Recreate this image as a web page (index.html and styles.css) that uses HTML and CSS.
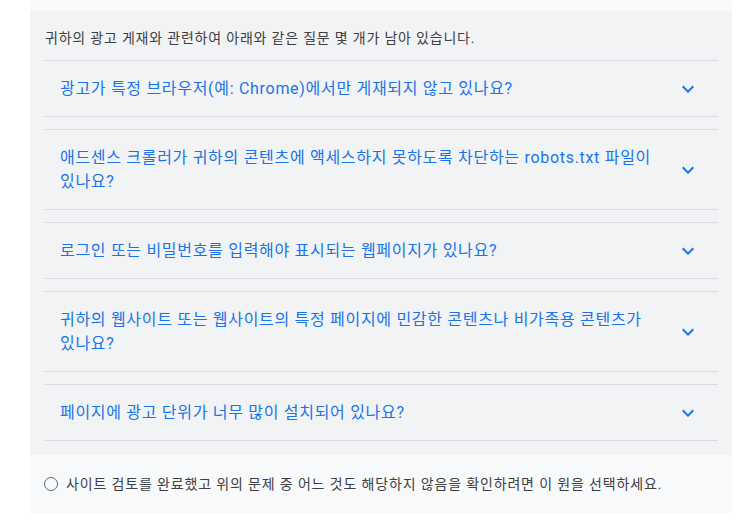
FILE: index.html
```html
<!DOCTYPE html>
<html lang="ko">
<head>
<meta charset="utf-8">
<link rel="stylesheet" href="styles.css">
</head>
<body>
<div class="panel">
  <div class="top-strip"></div>
  <div class="questions">
    <p class="intro">귀하의 광고 게재와 관련하여 아래와 같은 질문 몇 개가 남아 있습니다.</p>
    <div class="list">
      <div class="item">
        <span class="q">광고가 특정 브라우저(예: Chrome)에서만 게재되지 않고 있나요?</span>
        <svg class="chev" viewBox="0 0 24 24" width="24" height="24"><path d="M16.59 8.59L12 13.17 7.41 8.59 6 10l6 6 6-6z"/></svg>
      </div>
      <div class="item">
        <span class="q">애드센스 크롤러가 귀하의 콘텐츠에 액세스하지 못하도록 차단하는 robots.txt 파일이 있나요?</span>
        <svg class="chev" viewBox="0 0 24 24" width="24" height="24"><path d="M16.59 8.59L12 13.17 7.41 8.59 6 10l6 6 6-6z"/></svg>
      </div>
      <div class="item">
        <span class="q">로그인 또는 비밀번호를 입력해야 표시되는 웹페이지가 있나요?</span>
        <svg class="chev" viewBox="0 0 24 24" width="24" height="24"><path d="M16.59 8.59L12 13.17 7.41 8.59 6 10l6 6 6-6z"/></svg>
      </div>
      <div class="item">
        <span class="q">귀하의 웹사이트 또는 웹사이트의 특정 페이지에 민감한 콘텐츠나 비가족용 콘텐츠가 있나요?</span>
        <svg class="chev" viewBox="0 0 24 24" width="24" height="24"><path d="M16.59 8.59L12 13.17 7.41 8.59 6 10l6 6 6-6z"/></svg>
      </div>
      <div class="item">
        <span class="q">페이지에 광고 단위가 너무 많이 설치되어 있나요?</span>
        <svg class="chev" viewBox="0 0 24 24" width="24" height="24"><path d="M16.59 8.59L12 13.17 7.41 8.59 6 10l6 6 6-6z"/></svg>
      </div>
    </div>
  </div>
  <label class="confirm">
    <span class="radio"></span>
    <span class="confirm-text">사이트 검토를 완료했고 위의 문제 중 어느 것도 해당하지 않음을 확인하려면 이 원을 선택하세요.</span>
  </label>
</div>
</body>
</html>
```
FILE: styles.css
```css
html, body {
  margin: 0;
  padding: 0;
  background: #ffffff;
}
body {
  font-family: Roboto, "Noto Sans CJK KR", sans-serif;
  padding: 0 14px 0 30px;
  word-break: keep-all;
}
.panel {
  width: 702px;
}
.top-strip {
  height: 11px;
  background: #f8f9fa;
}
.questions {
  background: #f1f3f4;
  padding: 17px 14px 14px 14px;
}
.intro {
  margin: 0 0 12px 1px;
  font-size: 14px;
  line-height: 20px;
  letter-spacing: 0.8px;
  color: #3c4043;
}
.list {
  display: flex;
  flex-direction: column;
  gap: 12px;
}
.item {
  display: flex;
  align-items: center;
  gap: 16px;
  border-top: 1px solid #dadce0;
  border-bottom: 1px solid #dadce0;
  padding: 16px 18px 15px 16px;
}
.q {
  flex: 1;
  font-size: 16px;
  line-height: 24px;
  letter-spacing: 0.7px;
  color: #1a73e8;
}
.chev {
  flex: none;
  fill: #1a73e8;
}
.confirm {
  display: flex;
  align-items: center;
  gap: 8px;
  height: 58px;
  background: #f8f9fa;
  padding-left: 14px;
}
.radio {
  width: 12px;
  height: 12px;
  border: 1.5px solid #5f6368;
  border-radius: 50%;
  flex: none;
}
.confirm-text {
  font-size: 14px;
  line-height: 20px;
  letter-spacing: 0.85px;
  color: #3c4043;
}
```
